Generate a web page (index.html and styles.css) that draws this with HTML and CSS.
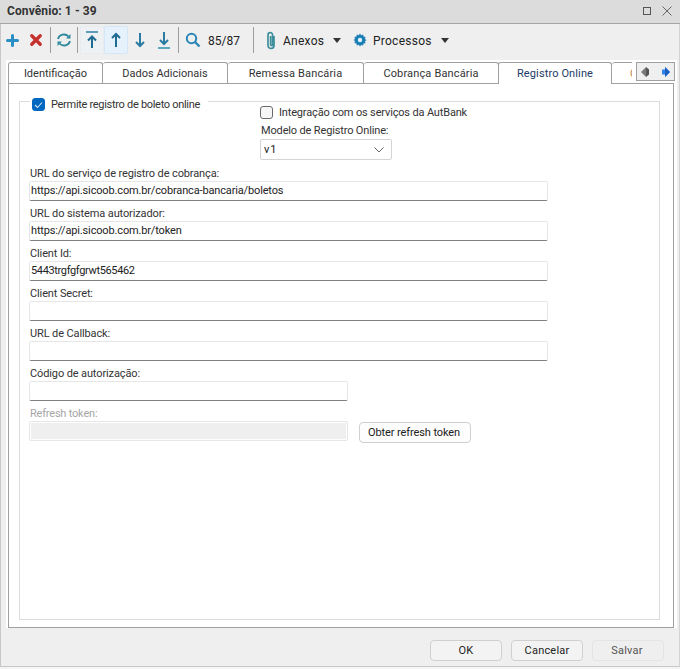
FILE: index.html
```html
<!DOCTYPE html>
<html lang="pt-BR">
<head>
<meta charset="utf-8">
<title>Convênio</title>
<link rel="stylesheet" href="styles.css">
</head>
<body>
<div class="window">
  <header class="titlebar">
    <span class="title">Convênio: 1 - 39</span>
    <span class="win-btns">
      <svg width="12" height="12" viewBox="0 0 12 12"><rect x="2.500" y="2.500" width="7" height="7" fill="none" stroke="#555"/></svg>
      <svg width="12" height="12" viewBox="0 0 12 12"><path d="M1.500 1.500l9 9M10.500 1.500l-9 9" stroke="#666" fill="none"/></svg>
    </span>
  </header>
  <nav class="toolbar">
    <span class="tool tool-add"><svg width="13" height="13" viewBox="0 0 13 13"><path d="M6.500 1.500v10M1.500 6.500h10" stroke="#2a8fc4" stroke-width="3" stroke-linecap="round"/></svg></span>
    <span class="tool tool-del"><svg width="14" height="14" viewBox="0 0 14 14"><path d="M2.800 2.800l8.400 8.400M11.200 2.800l-8.400 8.400" stroke="#c5322e" stroke-width="3.400" stroke-linecap="round"/></svg></span>
    <span class="sep"></span>
    <span class="tool tool-sync"><svg width="16" height="16" viewBox="0 0 16 16"><path d="M2 7a6 5.500 0 0 1 10.500-2.500M14 9a6 5.500 0 0 1-10.500 2.500" fill="none" stroke="#2e8a9e" stroke-width="1.800"/><path d="M14.500 2v4.500h-4.500zM1.500 14V9.500h4.500z" fill="#2e8a9e"/></svg></span>
    <span class="sep"></span>
    <span class="tool tool-nav hover-soft"><svg width="14" height="18" viewBox="0 0 14 18"><path d="M1 1h12" stroke="#2d7fa6" stroke-width="1.500"/><path d="M7 5.500V17M3 9.500l4-4 4 4" fill="none" stroke="#1f6c93" stroke-width="2"/></svg></span>
    <span class="tool tool-nav hover-blue"><svg width="14" height="18" viewBox="0 0 14 18"><path d="M7 3v13M3 7l4-4 4 4" fill="none" stroke="#1f6c93" stroke-width="2"/></svg></span>
    <span class="tool tool-nav"><svg width="14" height="18" viewBox="0 0 14 18"><path d="M7 2v13M3 11l4 4 4-4" fill="none" stroke="#2a7ba3" stroke-width="2"/></svg></span>
    <span class="tool tool-nav"><svg width="14" height="18" viewBox="0 0 14 18"><path d="M7 1v12M3 9l4 4 4-4" fill="none" stroke="#2a7ba3" stroke-width="2"/><path d="M1 17h12" stroke="#2d8fb0" stroke-width="1.500"/></svg></span>
    <span class="sep sep-nav"></span>
    <span class="tool tool-search"><svg width="16" height="16" viewBox="0 0 16 16"><circle cx="6.500" cy="6.500" r="4.700" fill="none" stroke="#2a86b8" stroke-width="2"/><path d="M10 10l4.500 4.500" stroke="#2a86b8" stroke-width="2.400"/></svg></span>
    <span class="counter">85/87</span>
    <span class="sep"></span>
    <span class="tool tool-clip"><svg width="12" height="19" viewBox="0 0 12 19"><path d="M9 5v9.500a3 3 0 0 1-6 0V4a2.300 2.300 0 0 1 4.600 0v9.500a1 1 0 0 1-2 0V5" fill="none" stroke="#3d8f9b" stroke-width="1.700"/></svg></span>
    <span class="menu-label label-anexos">Anexos</span>
    <span class="caret caret-anexos"></span>
    <span class="tool tool-gear"><svg width="14" height="14" viewBox="0 0 14 14"><path d="M7 .5l1.200 1.700 2-.7.300 2.100 2.100.3-.7 2 1.700 1.100-1.700 1.200.7 2-2.100.3-.3 2.100-2-.7L7 13.500l-1.200-1.700-2 .7-.3-2.100-2.100-.3.7-2L.4 7l1.700-1.100-.7-2 2.100-.3.3-2.100 2 .7z" fill="#1a7fb5"/><circle cx="7" cy="7" r="2.200" fill="#e8f2f6"/></svg></span>
    <span class="menu-label label-processos">Processos</span>
    <span class="caret caret-processos"></span>
  </nav>
  <main class="page">
    <div class="tabs-row">
      <div class="tabs">
        <span class="tab tab-id">Identificação</span>
        <span class="tab tab-dados">Dados Adicionais</span>
        <span class="tab tab-remessa">Remessa Bancária</span>
        <span class="tab tab-cobranca">Cobrança Bancária</span>
        <span class="tab tab-registro active">Registro Online</span>
        <span class="tab tab-next">C</span>
      </div>
      <div class="tab-scroll">
        <svg width="12" height="12" viewBox="0 0 12 12"><path d="M1 6l5-5v2.500h3v5H6V11z" fill="#7b7b7b"/><path d="M6 1v10l3-2.500v-5z" fill="#555"/></svg>
        <svg width="12" height="12" viewBox="0 0 12 12"><path d="M11 6L6 1v2.500H3v5h3V11z" fill="#2f86e8"/><path d="M6 1v10l5-5z" fill="#1c5fc0"/></svg>
      </div>
    </div>
    <section class="panel">
      <div class="group">
        <label class="legend">
          <span class="check checked"><svg width="9" height="8" viewBox="0 0 9 8"><path d="M1 4l2.500 2.500L8 1.500" fill="none" stroke="#cfe3f5" stroke-width="1.100"/></svg></span>
          <span>Permite registro de boleto online</span>
        </label>
        <div class="side">
          <label class="check-row"><span class="check"></span><span>Integração com os serviços da AutBank</span></label>
          <div class="side-label">Modelo de Registro Online:</div>
          <div class="select"><span>v1</span><svg width="10" height="6" viewBox="0 0 10 6"><path d="M.5 .5L5 5 9.500 .5" fill="none" stroke="#666"/></svg></div>
        </div>
        <div class="field"><div class="field-label">URL do serviço de registro de cobrança:</div><div class="input">https://api.sicoob.com.br/cobranca-bancaria/boletos</div></div>
        <div class="field"><div class="field-label">URL do sistema autorizador:</div><div class="input">https://api.sicoob.com.br/token</div></div>
        <div class="field"><div class="field-label">Client Id:</div><div class="input input-tight">5443trgfgfgrwt565462</div></div>
        <div class="field"><div class="field-label">Client Secret:</div><div class="input"></div></div>
        <div class="field"><div class="field-label">URL de Callback:</div><div class="input"></div></div>
        <div class="field"><div class="field-label">Código de autorização:</div><div class="input input-short"></div></div>
        <div class="field field-disabled">
          <div class="field-label">Refresh token:</div>
          <div class="token-row">
            <div class="input input-short input-disabled"></div>
            <button class="btn btn-token" type="button">Obter refresh token</button>
          </div>
        </div>
      </div>
    </section>
  </main>
  <footer class="footer">
    <button class="btn btn-foot" type="button">OK</button>
    <button class="btn btn-foot" type="button">Cancelar</button>
    <button class="btn btn-foot btn-off" type="button">Salvar</button>
  </footer>
</div>
</body>
</html>
```
FILE: styles.css
```css
* { box-sizing: border-box; }
html, body { margin: 0; padding: 0; }
body {
  width: 680px;
  height: 669px;
  overflow: hidden;
  background: #f4f4f4;
  font-family: Roboto, "Liberation Sans", sans-serif;
  font-size: 11px;
  color: #222;
}
.window {
  width: 680px;
  height: 667px;
  display: flex;
  flex-direction: column;
  background: #efefef;
  border-left: 1px solid #c8c8c8;
  border-right: 1px solid #d4d4d4;
  border-bottom: 1px solid #c8c8c8;
}
.titlebar {
  height: 24px;
  flex: none;
  margin-left: -1px;
  margin-right: -1px;
  padding: 0 7px 2px 7px;
  display: flex;
  align-items: center;
  justify-content: space-between;
  background: #dcdcdc;
  border-bottom: 1px solid #a6a6a6;
}
.title {
  font-size: 12px;
  font-weight: 700;
  color: #333;
  letter-spacing: .1px;
}
.win-btns { display: flex; gap: 8px; }
.win-btns svg { display: block; }
.toolbar {
  height: 36px;
  flex: none;
  display: flex;
  align-items: center;
  padding: 0 0 4px 4px;
  font-size: 12px;
}
.tool { display: flex; align-items: center; justify-content: center; flex: none; }
.tool-add { width: 14px; margin-right: 9px; }
.tool-del { width: 16px; margin-right: 6px; }
.sep { width: 1px; height: 26px; background: #9c9c9c; flex: none; }
.tool-sync { width: 26px; }
.tool-nav { width: 24px; height: 28px; }
.sep + .tool-nav { margin-left: 2px; }
.hover-soft { background: #eef1f3; border: 1px solid #e8ecef; }
.hover-blue { background: #e5f1fb; border: 1px solid #d5e7f6; border-radius: 2px; }
.sep-nav { margin-left: 2px; }
.tool-search { width: 27px; }
.counter { width: 47px; padding: 2px 0 0 2px; color: #222; }
.tool-clip { width: 29px; justify-content: flex-end; padding-right: 6px; }
.menu-label { color: #222; letter-spacing: .25px; padding-top: 2px; }
.label-anexos { width: 50px; }
.label-processos { width: 68px; }
.caret {
  width: 0;
  height: 0;
  flex: none;
  border-left: 4.500px solid transparent;
  border-right: 4.500px solid transparent;
  border-top: 5px solid #333;
}
.caret-anexos { margin-right: 11px; }
.tool-gear { width: 21px; justify-content: flex-start; padding-left: 1px; }
.page {
  flex: none;
  height: 568px;
  margin-left: 5px;
  width: 671px;
  background: #fff;
  padding: 2px 3px 0 2px;
  position: relative;
}
.tabs-row { height: 21px; }
.tabs {
  display: flex;
  width: 624px;
  height: 22px;
  overflow: hidden;
  position: relative;
  z-index: 2;
}
.tab {
  flex: none;
  height: 21px;
  border: 1px solid #a0a0a0;
  border-bottom: 0;
  border-left-width: 0;
  border-radius: 3px 3px 0 0;
  text-align: center;
  line-height: 21px;
  color: #333;
  background: #fff;
}
.tab-id { width: 95px; border-left-width: 1px; }
.tab-dados { width: 125px; }
.tab-remessa { width: 136px; letter-spacing: .15px; }
.tab-cobranca { width: 135px; letter-spacing: .15px; }
.tab-registro { width: 113px; }
.tab-next { width: 40px; text-align: left; padding-left: 18px; color: #c08a50; }
.tab.active {
  height: 22px;
  color: #1d3a66;
  border-left-width: 1px;
  margin-left: -1px;
  width: 114px;
  letter-spacing: .12px;
}
.tab-scroll {
  position: absolute;
  left: 630px;
  top: 2px;
  width: 39px;
  height: 19px;
  display: flex;
  align-items: center;
  justify-content: space-around;
  background: #efefef;
  border: 1px solid #a0a0a0;
}
.tab-scroll svg { display: block; }
.panel {
  height: 545px;
  border: 1px solid #a0a0a0;
  padding: 17px 13px 8px 10px;
}
.group {
  position: relative;
  height: 519px;
  border: 1px solid #dcdcdc;
  padding: 2px 10px 0 9px;
}
.legend {
  position: absolute;
  left: 10px;
  top: -5px;
  padding: 0 8px 0 2px;
  height: 15px;
  display: flex;
  align-items: center;
  gap: 6px;
  background: #fff;
  color: #333;
  letter-spacing: -.3px;
}
.check {
  width: 13px;
  height: 13px;
  flex: none;
  display: flex;
  align-items: center;
  justify-content: center;
  border: 1px solid #6a6a6a;
  border-radius: 3px;
  background: #f6f6f6;
}
.check.checked { background: #0067c0; border-color: #0067c0; }
.side {
  margin-left: 231px;
  height: 57px;
}
.check-row {
  display: flex;
  align-items: center;
  gap: 6px;
  height: 16px;
  color: #333;
  letter-spacing: -.16px;
}
.side-label { margin: 3px 0 0 1px; height: 16px; line-height: 16px; color: #333; letter-spacing: -.15px; }
.select {
  width: 132px;
  height: 21px;
  padding: 0 7px 0 3px;
  display: flex;
  align-items: center;
  justify-content: space-between;
  border: 1px solid #d4d4d4;
  border-radius: 2px;
  background: #fff;
  letter-spacing: 1px;
}
.field { height: 40px; }
.field-label {
  height: 20px;
  line-height: 26px;
  padding-left: 1px;
  color: #333;
  letter-spacing: -.12px;
}
.input {
  width: 519px;
  height: 20px;
  line-height: 18px;
  padding-left: 1px;
  border: 1px solid #e6e6e6;
  border-bottom: 1px solid #808080;
  border-radius: 2px;
  background: #fff;
  color: #222;
  letter-spacing: -.15px;
}
.input-tight { letter-spacing: -.35px; }
.input-short { width: 319px; }
.field-disabled .field-label { color: #a6a6a6; letter-spacing: -.2px; }
.token-row { display: flex; align-items: flex-start; }
.input-disabled {
  background: #efefef;
  border: 1px solid #e6e6e6;
  box-shadow: inset 0 0 0 1px #fff;
}
.btn {
  font-family: inherit;
  font-size: 11px;
  color: #222;
  padding: 0;
  background: #fdfdfd;
  border: 1px solid #cfcfcf;
  border-radius: 4px;
}
.btn-token { width: 112px; height: 21px; margin: 1px 0 0 11px; letter-spacing: -.1px; padding-right: 2px; }
.footer {
  flex: 1;
  display: flex;
  justify-content: flex-end;
  gap: 9px;
  padding: 12px 15px 0 0;
  align-items: flex-start;
}
.btn-foot { width: 72px; height: 21px; background: #f3f3f3; border-color: #d0d0d0; letter-spacing: .2px; }
.btn-off { color: #555; background: #efefef; border-color: #e4e4e4; padding-right: 2px; }
```
